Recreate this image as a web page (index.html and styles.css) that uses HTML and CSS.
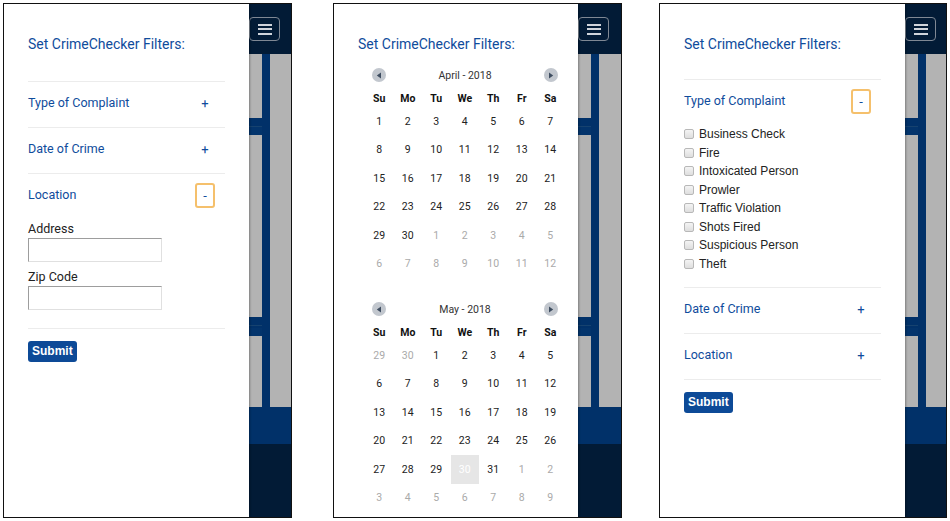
FILE: index.html
```html
<!DOCTYPE html>
<html lang="en">
<head>
<meta charset="utf-8">
<title>CrimeChecker Filters</title>
<link rel="stylesheet" href="styles.css">
</head>
<body>
<div class="screens">

  <!-- Screen 1: Location expanded -->
  <div class="phone">
    <div class="drawer">
      <h2 class="title">Set CrimeChecker Filters:</h2>
      <div class="acc">
        <div class="acc-item">
          <div class="acc-head"><span>Type of Complaint</span><button class="toggle">+</button></div>
        </div>
        <div class="acc-item">
          <div class="acc-head"><span>Date of Crime</span><button class="toggle">+</button></div>
        </div>
        <div class="acc-item">
          <div class="acc-head"><span>Location</span><button class="toggle toggle--open">-</button></div>
          <div class="loc-body">
            <label class="field-label">Address</label>
            <input class="field-input" type="text">
            <label class="field-label field-label--gap">Zip Code</label>
            <input class="field-input" type="text">
          </div>
        </div>
      </div>
      <button class="submit">Submit</button>
    </div>
    <div class="backdrop">
      <div class="bd-header"><div class="burger"><i></i><i></i><i></i></div></div>
      <div class="bd-body">
        <div class="bd-left">
          <div class="bd-block bd-block--a"></div>
          <div class="bd-band"></div>
          <div class="bd-block bd-block--b"></div>
          <div class="bd-band bd-band--b"></div>
          <div class="bd-block bd-block--c"></div>
        </div>
        <div class="bd-rail"></div>
        <div class="bd-right"></div>
      </div>
      <div class="bd-foot"></div>
      <div class="bd-bottom"></div>
    </div>
  </div>

  <!-- Screen 2: Calendar -->
  <div class="phone phone--cal">
    <div class="drawer drawer--cal">
      <h2 class="title title--cal">Set CrimeChecker Filters:</h2>
      <div class="cal">
        <div class="cal-month">
          <span class="cal-nav cal-nav--prev"><svg width="6" height="7" viewBox="0 0 6 7"><path d="M5 0.5 L0.8 3.5 L5 6.5 Z" fill="#3e4d60"/></svg></span>
          <span class="cal-label">April - 2018</span>
          <span class="cal-nav cal-nav--next"><svg width="6" height="7" viewBox="0 0 6 7"><path d="M1 0.5 L5.2 3.5 L1 6.5 Z" fill="#3e4d60"/></svg></span>
        </div>
        <div class="cal-grid">
          <span class="dow">Su</span><span class="dow">Mo</span><span class="dow">Tu</span><span class="dow">We</span><span class="dow">Th</span><span class="dow">Fr</span><span class="dow">Sa</span>
          <span class="day">1</span><span class="day">2</span><span class="day">3</span><span class="day">4</span><span class="day">5</span><span class="day">6</span><span class="day">7</span>
          <span class="day">8</span><span class="day">9</span><span class="day">10</span><span class="day">11</span><span class="day">12</span><span class="day">13</span><span class="day">14</span>
          <span class="day">15</span><span class="day">16</span><span class="day">17</span><span class="day">18</span><span class="day">19</span><span class="day">20</span><span class="day">21</span>
          <span class="day">22</span><span class="day">23</span><span class="day">24</span><span class="day">25</span><span class="day">26</span><span class="day">27</span><span class="day">28</span>
          <span class="day">29</span><span class="day">30</span><span class="day day--muted">1</span><span class="day day--muted">2</span><span class="day day--muted">3</span><span class="day day--muted">4</span><span class="day day--muted">5</span>
          <span class="day day--muted">6</span><span class="day day--muted">7</span><span class="day day--muted">8</span><span class="day day--muted">9</span><span class="day day--muted">10</span><span class="day day--muted">11</span><span class="day day--muted">12</span>
        </div>
      </div>
      <div class="cal cal--second">
        <div class="cal-month">
          <span class="cal-nav cal-nav--prev"><svg width="6" height="7" viewBox="0 0 6 7"><path d="M5 0.5 L0.8 3.5 L5 6.5 Z" fill="#3e4d60"/></svg></span>
          <span class="cal-label">May - 2018</span>
          <span class="cal-nav cal-nav--next"><svg width="6" height="7" viewBox="0 0 6 7"><path d="M1 0.5 L5.2 3.5 L1 6.5 Z" fill="#3e4d60"/></svg></span>
        </div>
        <div class="cal-grid">
          <span class="dow">Su</span><span class="dow">Mo</span><span class="dow">Tu</span><span class="dow">We</span><span class="dow">Th</span><span class="dow">Fr</span><span class="dow">Sa</span>
          <span class="day day--muted">29</span><span class="day day--muted">30</span><span class="day">1</span><span class="day">2</span><span class="day">3</span><span class="day">4</span><span class="day">5</span>
          <span class="day">6</span><span class="day">7</span><span class="day">8</span><span class="day">9</span><span class="day">10</span><span class="day">11</span><span class="day">12</span>
          <span class="day">13</span><span class="day">14</span><span class="day">15</span><span class="day">16</span><span class="day">17</span><span class="day">18</span><span class="day">19</span>
          <span class="day">20</span><span class="day">21</span><span class="day">22</span><span class="day">23</span><span class="day">24</span><span class="day">25</span><span class="day">26</span>
          <span class="day">27</span><span class="day">28</span><span class="day">29</span><span class="day day--today">30</span><span class="day">31</span><span class="day day--muted">1</span><span class="day day--muted">2</span>
          <span class="day day--muted">3</span><span class="day day--muted">4</span><span class="day day--muted">5</span><span class="day day--muted">6</span><span class="day day--muted">7</span><span class="day day--muted">8</span><span class="day day--muted">9</span>
        </div>
      </div>
    </div>
    <div class="backdrop">
      <div class="bd-header"><div class="burger"><i></i><i></i><i></i></div></div>
      <div class="bd-body">
        <div class="bd-left">
          <div class="bd-block bd-block--a"></div>
          <div class="bd-band"></div>
          <div class="bd-block bd-block--b"></div>
          <div class="bd-band bd-band--b"></div>
          <div class="bd-block bd-block--c"></div>
        </div>
        <div class="bd-rail"></div>
        <div class="bd-right"></div>
      </div>
      <div class="bd-foot"></div>
      <div class="bd-bottom"></div>
    </div>
  </div>

  <!-- Screen 3: Type of Complaint expanded -->
  <div class="phone phone--third">
    <div class="drawer">
      <h2 class="title title--tight">Set CrimeChecker Filters:</h2>
      <div class="acc">
        <div class="acc-item">
          <div class="acc-head"><span>Type of Complaint</span><button class="toggle toggle--open">-</button></div>
          <ul class="checks">
            <li><span class="box"></span>Business Check</li>
            <li><span class="box"></span>Fire</li>
            <li><span class="box"></span>Intoxicated Person</li>
            <li><span class="box"></span>Prowler</li>
            <li><span class="box"></span>Traffic Violation</li>
            <li><span class="box"></span>Shots Fired</li>
            <li><span class="box"></span>Suspicious Person</li>
            <li><span class="box"></span>Theft</li>
          </ul>
        </div>
        <div class="acc-item">
          <div class="acc-head"><span>Date of Crime</span><button class="toggle">+</button></div>
        </div>
        <div class="acc-item">
          <div class="acc-head"><span>Location</span><button class="toggle">+</button></div>
        </div>
      </div>
      <button class="submit">Submit</button>
    </div>
    <div class="backdrop">
      <div class="bd-header"><div class="burger"><i></i><i></i><i></i></div></div>
      <div class="bd-body">
        <div class="bd-left">
          <div class="bd-block bd-block--a"></div>
          <div class="bd-band"></div>
          <div class="bd-block bd-block--b"></div>
          <div class="bd-band bd-band--b"></div>
          <div class="bd-block bd-block--c"></div>
        </div>
        <div class="bd-rail"></div>
        <div class="bd-right"></div>
      </div>
      <div class="bd-foot"></div>
      <div class="bd-bottom"></div>
    </div>
  </div>

</div>
</body>
</html>
```

FILE: styles.css
```css
* { box-sizing: border-box; }

html, body {
  margin: 0;
  padding: 0;
  background: #ffffff;
}

body {
  font-family: Roboto, "Liberation Sans", Arial, sans-serif;
  color: #222;
}

.screens {
  display: flex;
  align-items: flex-start;
  padding: 3px 0 0 3px;
}

.phone {
  width: 289px;
  height: 515px;
  border: 1px solid #111;
  display: flex;
  overflow: hidden;
  background: #fff;
}

.phone--cal {
  margin-left: 41px;
}

.phone--third {
  margin-left: 37px;
  width: 288px;
}

/* ---------- Drawer ---------- */
.drawer {
  width: 245px;
  flex: none;
  background: #fff;
  padding: 30px 24px 0 24px;
  position: relative;
  z-index: 2;
  box-shadow: 1px 0 2px rgba(0, 0, 0, 0.3);
}

.drawer--cal {
  width: 244px;
}

.title {
  margin: 0 0 27px 0;
  font-size: 14px;
  line-height: 20px;
  font-weight: 400;
  color: #0f4c9c;
}

.title--tight {
  margin-bottom: 25px;
}

.title--cal {
  margin-bottom: 0;
}

.acc-item {
  border-top: 1px solid #ececec;
}

.acc-item:last-child {
  border-bottom: 1px solid #ececec;
}

.acc-head {
  display: flex;
  align-items: center;
  justify-content: space-between;
  padding: 12px 0 15px 0;
  font-size: 12.5px;
  line-height: 18px;
  color: #0f4c9c;
}

.toggle {
  width: 20px;
  height: 25px;
  margin: -3.5px 10px -3.5px 0;
  padding: 0;
  border: 2px solid transparent;
  border-radius: 3px;
  background: transparent;
  color: #0f4c9c;
  font-family: Roboto, sans-serif;
  font-size: 13px;
  line-height: 21px;
  text-align: center;
}

.toggle--open {
  border-color: #f5c06c;
}

/* Location fields */
.loc-body {
  display: flex;
  flex-direction: column;
  align-items: flex-start;
  margin-top: -15px;
  padding: 17px 0 18px 0;
}

.field-label {
  font-size: 12.5px;
  line-height: 16px;
  color: #222;
}

.field-label--gap {
  margin-top: 7px;
}

.field-input {
  margin-top: 1px;
  width: 134px;
  height: 24px;
  border: 1px solid;
  border-color: #9d9d9d #e0e0e0 #e0e0e0 #9d9d9d;
  background: #fff;
  padding: 0;
}

/* Checkbox list */
.checks {
  list-style: none;
  margin: 0;
  padding: 0 0 14px 0;
}

.checks li {
  display: flex;
  align-items: center;
  height: 18.5px;
  font-family: "Liberation Sans", Arial, sans-serif;
  font-size: 12px;
  color: #222;
}

.box {
  width: 10px;
  height: 10px;
  margin-right: 5px;
  border: 1px solid #b8b8b8;
  border-radius: 2px;
  background: linear-gradient(#f4f4f4, #dedede);
}

.submit {
  margin-top: 12px;
  height: 21px;
  padding: 0 4px;
  border: 0;
  border-radius: 3px;
  background: #0d4a97;
  color: #fff;
  font-family: "Liberation Sans", Arial, sans-serif;
  font-weight: 700;
  font-size: 12px;
  line-height: 21px;
}

/* ---------- Calendar ---------- */
.cal {
  margin: 7px 0 0 7px;
  width: 200px;
}

.cal--second {
  margin-top: 17px;
}

.cal-month {
  display: grid;
  grid-template-columns: 28.5px 1fr 28.5px;
  align-items: center;
  height: 28px;
}

.cal-nav {
  justify-self: center;
  width: 14px;
  height: 14px;
  border-radius: 50%;
  background: #c2c7ce;
  display: flex;
  align-items: center;
  justify-content: center;
}

.cal-nav--prev svg { margin-left: -1px; }
.cal-nav--next svg { margin-left: 1px; }

.cal-label {
  text-align: center;
  font-size: 10.5px;
  color: #333;
}

.cal-grid {
  display: grid;
  grid-template-columns: repeat(7, 28.5px);
  grid-template-rows: 18px;
  grid-auto-rows: 28.5px;
}

.dow {
  display: flex;
  align-items: center;
  justify-content: center;
  font-size: 10.5px;
  font-weight: 700;
  color: #111;
}

.day {
  display: flex;
  align-items: center;
  justify-content: center;
  font-size: 10.5px;
  color: #222;
}

.day--muted {
  color: #aaa;
}

.day--today {
  background: #e6e6e6;
  color: #fff;
}

/* ---------- Backdrop page behind drawer ---------- */
.backdrop {
  flex: 1;
  display: flex;
  flex-direction: column;
  min-width: 0;
}

.bd-header {
  height: 50px;
  flex: none;
  background: #021b36;
  padding-top: 13px;
}

.burger {
  width: 31px;
  height: 24px;
  border: 1px solid #7f8894;
  border-radius: 4px;
  display: flex;
  flex-direction: column;
  align-items: center;
  justify-content: center;
  gap: 2.5px;
}

.burger i {
  display: block;
  width: 14px;
  height: 2px;
  background: #cfd4db;
}

.bd-body {
  height: 353px;
  flex: none;
  display: flex;
}

.bd-left {
  width: 13px;
  display: flex;
  flex-direction: column;
}

.bd-block {
  background: #b3b3b3;
}

.bd-block--a { height: 64px; }
.bd-block--b { height: 182px; }
.bd-block--c { flex: 1; }

.bd-band {
  height: 17px;
  background: #013169;
  box-shadow: inset 0 -8px 0 #03346c, inset 0 8px 0 #013169, inset 0 9px 0 #16426f;
}

.bd-band--b {
  height: 19px;
}

.bd-rail {
  width: 8px;
  background: #013169;
}

.bd-right {
  flex: 1;
  background: #b3b3b3;
}

.bd-foot {
  height: 37px;
  flex: none;
  background: #013169;
}

.bd-bottom {
  flex: 1;
  background: #021b36;
}
```
